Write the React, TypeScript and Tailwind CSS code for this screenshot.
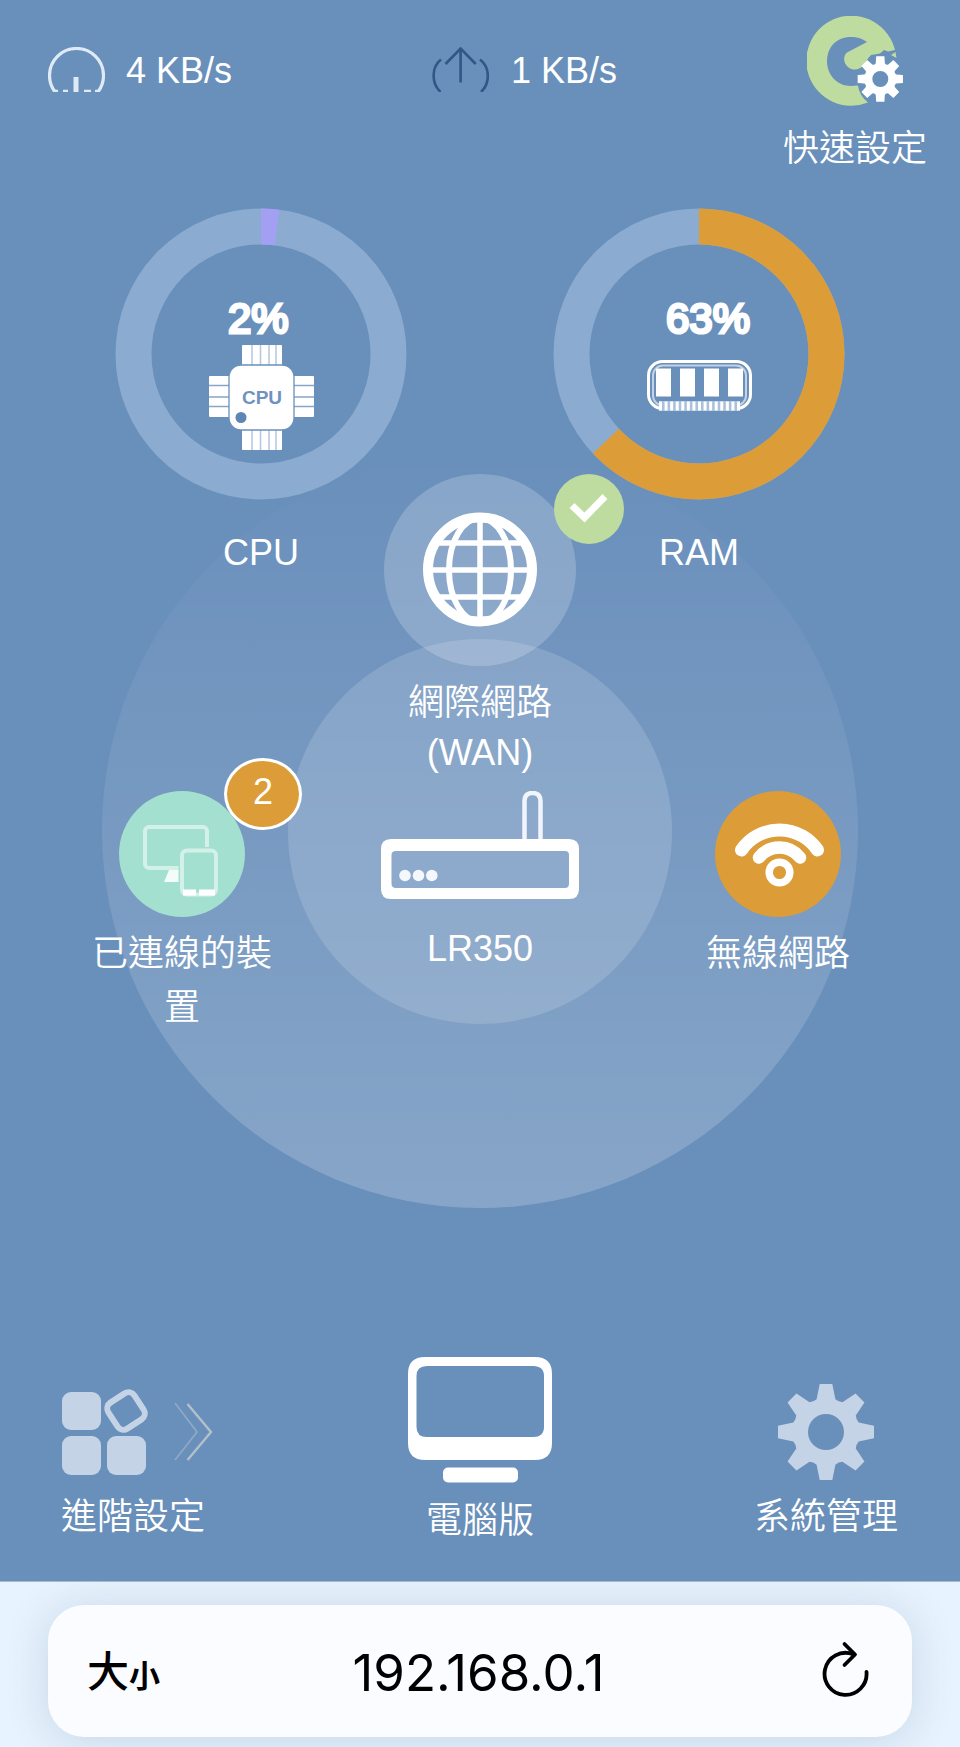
import React from "react";

const FONT = "font-['Liberation_Sans','Noto_Sans_CJK_TC',sans-serif]";

function gearPath(cx: number, cy: number, tip: number, valley: number, tipHalf: number, baseHalf: number) {
  const pt = (r: number, a: number) => `${(cx + r * Math.sin(a)).toFixed(2)} ${(cy - r * Math.cos(a)).toFixed(2)}`;
  let d = "";
  for (let i = 0; i < 8; i++) {
    const a = (i * Math.PI) / 4;
    d += `${i === 0 ? "M" : "L"}${pt(valley, a - baseHalf)}L${pt(tip, a - tipHalf)}L${pt(tip, a + tipHalf)}L${pt(valley, a + baseHalf)}`;
    d += `Q${pt(valley - 1.5, a + Math.PI / 8)} ${pt(valley, a + Math.PI / 4 - baseHalf)}`;
  }
  return d + "Z";
}

function Label({ children, className = "", leading = "leading-[54px]" }: { children: React.ReactNode; className?: string; leading?: string }) {
  return <div className={`text-center text-[36px] font-[350] text-white ${leading} ${className}`}>{children}</div>;
}

function DownloadIcon() {
  return (
    <svg width="57" height="45" viewBox="0 0 57 45" fill="none" stroke="#dfeaf7">
      <circle cx="28.5" cy="28.5" r="27" strokeWidth="3.2" />
      <path d="M28 30V45" strokeWidth="5" />
      <path d="M6 44h4M15 44h5M36 44h7M47 44h4" strokeWidth="2.5" />
    </svg>
  );
}

function UploadIcon() {
  return (
    <svg width="57" height="45" viewBox="0 0 57 45" fill="none" stroke="#315885" strokeWidth="2.6">
      <path d="M28.6 1V35.5M13.5 17L28.6 1.5L43.7 17" />
      <path d="M9 12.5C-.5 20 -1 36 8.500 45M48 12.500C58 20 58.500 36 49 45" />
    </svg>
  );
}

function QuickSetupIcon() {
  return (
    <svg width="96" height="90" viewBox="0 0 96 90">
      <path
        d="M61 86.500A45 45 0 1 1 88 34L81 35.500L77 34L73 37.500L64 39C60 43 58 47 56 50C52 54 46 55 41 51C36 47 36 40 40 36.500L60 26C49 17 21 18 20 45C20 59 30 70 44 70L51 69.500Q52 79 61 86.500Z"
        fill="#bedc9f"
      />
      <path d="M84 39L88.500 36L89.500 42Z" fill="#bedc9f" />
      <path fillRule="evenodd" d={gearPath(73.3, 63, 23, 16.5, 0.18, 0.28) + "M65.300 63a8 8 0 1 0 16 0a8 8 0 1 0 -16 0Z"} fill="#fff" />
    </svg>
  );
}

function CpuIcon() {
  return (
    <svg width="105" height="105" viewBox="0 0 105 105">
      <g fill="#fff">
        <rect x="33" y="0" width="40" height="105" rx="1" />
        <rect x="0" y="31" width="105" height="41" rx="1" />
      </g>
      <g stroke="#6a90bc" strokeWidth="1.500">
        <path d="M43 0V105M51.500 0V105M60 0V105M67 0V105" opacity=".5" />
        <path d="M0 40.500H105M0 52H105M0 61.500H105" opacity=".8" />
      </g>
      <rect x="20" y="20" width="65" height="65" rx="12" fill="#fff" stroke="#6a90bc" strokeWidth="1.300" />
      <circle cx="32" cy="72.500" r="5.500" fill="#5e86b4" />
      <text x="53" y="59" textAnchor="middle" fontSize="19" fontWeight="700" fill="#6f93be">CPU</text>
    </svg>
  );
}

function RamIcon() {
  return (
    <svg width="105" height="51" viewBox="0 0 105 51">
      <rect x="1.500" y="1.500" width="102" height="47" rx="14" fill="none" stroke="#fff" strokeWidth="3" />
      <rect x="6" y="5.500" width="93" height="40" rx="10" fill="none" stroke="#fff" strokeWidth="2" opacity=".6" />
      <rect x="12" y="41" width="81" height="10" fill="#a9c1dc" />
      <path d="M12 46H93" stroke="#fff" strokeWidth="9" strokeDasharray="3 2.570" />
      <path d="M9 8.500h15v28h-15zM33 8.500h15v28h-15zM57 8.500h15v28h-15zM81 8.500h15v28h-15z" fill="#fff" />
    </svg>
  );
}

function Gauge({ percent, color, text, children }: { percent: number; color: string; text: string; children: React.ReactNode }) {
  const r = 127.5;
  const c = 2 * Math.PI * r;
  return (
    <div className="relative h-[292px] w-[292px]">
      <svg className="absolute inset-0" width="292" height="292" viewBox="0 0 292 292" fill="none" strokeWidth="36">
        <circle cx="146" cy="146" r={r} stroke="#8bacd0" />
        <circle cx="146" cy="146" r={r} stroke={color} strokeDasharray={`${(c * percent) / 100} ${c}`} transform="rotate(-90 146 146)" />
      </svg>
      <div className="relative pt-[84px] pl-[113px] text-[42px] leading-[53px] text-white [-webkit-text-stroke:3px_white]">{text}</div>
      <div className="relative flex justify-center">{children}</div>
    </div>
  );
}

function GlobeIcon() {
  return (
    <svg width="116" height="116" viewBox="0 0 116 116" fill="none" stroke="#fff">
      <circle cx="58" cy="57.500" r="52" strokeWidth="10" />
      <path d="M58 6V109M6 58H110M15 31H101M15 85H101" strokeWidth="5.500" />
      <ellipse cx="58" cy="58" rx="31" ry="52" strokeWidth="6" />
    </svg>
  );
}

function DevicesIcon() {
  return (
    <svg width="126" height="126" viewBox="0 0 126 126" fill="none">
      <rect x="26" y="36" width="62" height="41" rx="4" stroke="#d3f1e9" strokeWidth="4" />
      <path d="M50 79H64V91H45Z" fill="#f4fcfa" />
      <rect x="63" y="59.500" width="34" height="44" rx="5" fill="#a3e0cf" stroke="#a3e0cf" strokeWidth="7" />
      <rect x="63" y="59.500" width="34" height="44" rx="5" stroke="#d3f1e9" strokeWidth="4" />
      <path d="M64 101.500H77M80 101.500H96" stroke="#fff" strokeWidth="6" />
    </svg>
  );
}

function WifiIcon() {
  return (
    <svg width="126" height="126" viewBox="0 0 126 126" fill="none" stroke="#fff" strokeLinecap="round">
      <path d="M26.500 59A46 46 0 0 1 102.500 59" strokeWidth="13" />
      <path d="M44 66.500A26 26 0 0 1 85 66.500" strokeWidth="12.500" />
      <circle cx="64.500" cy="81.500" r="14.500" fill="#dc9c37" stroke="#dc9c37" strokeWidth="3" />
      <circle cx="64.500" cy="81.500" r="10.300" strokeWidth="7.500" />
    </svg>
  );
}

function RouterIcon() {
  return (
    <svg width="198" height="108" viewBox="0 0 198 108">
      <path d="M143.500 52V10Q143.500 2 151.500 2Q159.500 2 159.500 10V52" fill="none" stroke="#f1f5fb" strokeWidth="4.500" />
      <path
        fillRule="evenodd"
        d="M10 48H188Q198 48 198 58V98Q198 108 188 108H10Q0 108 0 98V58Q0 48 10 48ZM15 60Q10.500 60 10.500 64V92.500Q10.500 97 15 97H184Q188 97 188 92.500V64Q188 60 184 60Z"
        fill="#fff"
      />
      <g fill="#f4f7fc">
        <circle cx="24" cy="84.500" r="5.800" />
        <circle cx="37.500" cy="84.500" r="5.800" />
        <circle cx="50.800" cy="84.500" r="5.800" />
      </g>
    </svg>
  );
}

function AdvancedIcon() {
  return (
    <svg width="154" height="90" viewBox="0 0 154 90" fill="none">
      <g fill="#c4d3e5">
        <rect x="2" y="5" width="39" height="38" rx="9" />
        <rect x="2" y="49" width="39" height="39" rx="9" />
        <rect x="47" y="49" width="39" height="39" rx="9" />
      </g>
      <rect x="50.500" y="8.500" width="31" height="31" rx="7" transform="rotate(-33 66 24)" stroke="#c4d3e5" strokeWidth="6" />
      <path d="M115 16L137 45L115 73" stroke="#8fa8c6" strokeWidth="1.800" />
      <path d="M127.500 17L151 45L127.500 73" stroke="#b4c0cc" strokeWidth="2.400" />
    </svg>
  );
}

function DesktopIcon() {
  return (
    <svg width="144" height="126" viewBox="0 0 144 126" fill="#fff">
      <path
        fillRule="evenodd"
        d="M17 0H127Q144 0 144 17V86Q144 103 127 103H17Q0 103 0 86V17Q0 0 17 0ZM19 9Q8.500 9 8.500 19V70Q8.500 80 19 80H125Q136 80 136 70V19Q136 9 125 9Z"
      />
      <rect x="35" y="110.500" width="75" height="15" rx="5" />
    </svg>
  );
}

export default function App() {
  return (
    <div className={`flex h-[1747px] w-[960px] flex-col overflow-hidden bg-[#e7f3fe] ${FONT}`}>
      <main className="relative flex h-[1582px] shrink-0 flex-col border-b border-[#a5bad2] bg-[#698fbb]">
        <div className="absolute top-[452px] left-[102px] h-[756px] w-[756px] rounded-full bg-linear-to-b from-white/0 to-white/20" />
        <div className="absolute top-[639px] left-[288px] h-[385px] w-[384px] rounded-full bg-white/15" />

        <header className="relative flex h-[208px] items-start pt-4 pr-[33px] pl-12">
          <div className="flex h-[108px] w-[384px] gap-[21px] pt-[31px] text-[36px] leading-[48px] text-white">
            <DownloadIcon />
            <span>4 KB/s</span>
          </div>
          <div className="flex h-[108px] gap-[22px] pt-[31px] text-[36px] leading-[48px] text-white">
            <UploadIcon />
            <span>1 KB/s</span>
          </div>
          <div className="ml-auto flex w-[144px] flex-col items-center">
            <QuickSetupIcon />
            <Label className="mt-[16px]">快速設定</Label>
          </div>
        </header>

        <section className="relative flex h-[1149px]">
          <div className="flex w-[384px] flex-col">
            <div className="ml-[115px] w-[292px]">
              <Gauge percent={2} color="#a3a0f3" text="2%">
                <CpuIcon />
              </Gauge>
              <Label className="mt-[26px]">CPU</Label>
            </div>
            <div className="relative mt-[211px] ml-[91px] flex w-[182px] flex-col items-center">
              <div className="rounded-full bg-[#a3e0cf]">
                <DevicesIcon />
              </div>
              <div className="absolute -top-[33px] left-[133px] h-[72px] w-[78px] rounded-[50%] border-[3px] border-white bg-[#dc9c37] text-center text-[36px] leading-[61px] text-white">2</div>
              <Label className="mt-[10px]">已連線的裝置</Label>
            </div>
          </div>

          <div className="flex w-[192px] flex-col items-center pt-[266px]">
            <div className="relative flex h-[192px] w-[192px] items-center justify-center rounded-full bg-white/20">
              <GlobeIcon />
              <svg className="absolute top-0 left-[170px]" width="70" height="70" viewBox="0 0 70 70" fill="none">
                <circle cx="35" cy="35" r="35" fill="#bedc9f" />
                <path d="M18 31.500L30.500 43.500L51 22.500" stroke="#fff" strokeWidth="7" />
              </svg>
            </div>
            <Label className="mt-[12px]" leading="leading-[50px]">網際網路</Label>
            <Label leading="leading-[50px]">(WAN)</Label>
            <div className="mt-[13px]">
              <RouterIcon />
            </div>
            <Label className="mt-[23px]">LR350</Label>
          </div>

          <div className="flex w-[384px] flex-col">
            <div className="-ml-[23px] w-[292px]">
              <Gauge percent={63} color="#dc9c37" text="63%">
                <div className="pt-[15px]">
                  <RamIcon />
                </div>
              </Gauge>
              <Label className="mt-[26px]">RAM</Label>
            </div>
            <div className="mt-[211px] ml-[111px] flex w-[182px] flex-col items-center">
              <div className="rounded-full bg-[#dc9c37]">
                <WifiIcon />
              </div>
              <Label className="mt-[10px]">無線網路</Label>
            </div>
          </div>
        </section>

        <nav className="relative flex justify-between pr-[62px] pl-[60px]">
          <div className="flex w-[146px] flex-col pt-[30px]">
            <AdvancedIcon />
            <Label className="mt-[13px]">進階設定</Label>
          </div>
          <div className="flex w-[144px] flex-col items-center">
            <DesktopIcon />
            <Label className="mt-[11px]">電腦版</Label>
          </div>
          <div className="flex w-[144px] flex-col items-center pt-[27px]">
            <svg width="96" height="96" viewBox="0 0 96 96">
              <path fillRule="evenodd" d={gearPath(48, 48, 48.500, 34, 0.13, 0.28) + "M30 48a18 18 0 1 0 36 0a18 18 0 1 0 -36 0Z"} fill="#c4d3e5" />
            </svg>
            <Label className="mt-[10px]">系統管理</Label>
          </div>
        </nav>
      </main>

      <footer className="px-12 pt-[23px]">
        <div className="flex h-[132px] items-center justify-between rounded-[36px] bg-[#fbfcff] pr-[42px] pl-[39px] text-black shadow-[0_4px_40px_rgba(80,110,140,0.22)]">
          <div className="flex w-[80px] items-baseline font-['Noto_Sans_CJK_TC',sans-serif]">
            <span className="text-[42px] leading-[60px] font-medium">大</span>
            <span className="text-[31px] leading-[60px] font-bold">小</span>
          </div>
          <div className="pt-[3px] font-['Inter',sans-serif] text-[51px] leading-[60px]">192.168.0.1</div>
          <div className="flex w-[80px] justify-end pb-[5px]">
            <svg width="48" height="56" viewBox="0 0 48 56" fill="none" stroke="#000" strokeWidth="3.800" strokeLinecap="round" strokeLinejoin="round">
              <path d="M44.500 31A21 21 0 1 1 31 13.200" />
              <path d="M22.500 3L33 13.500L22.500 24" />
            </svg>
          </div>
        </div>
      </footer>
    </div>
  );
}
